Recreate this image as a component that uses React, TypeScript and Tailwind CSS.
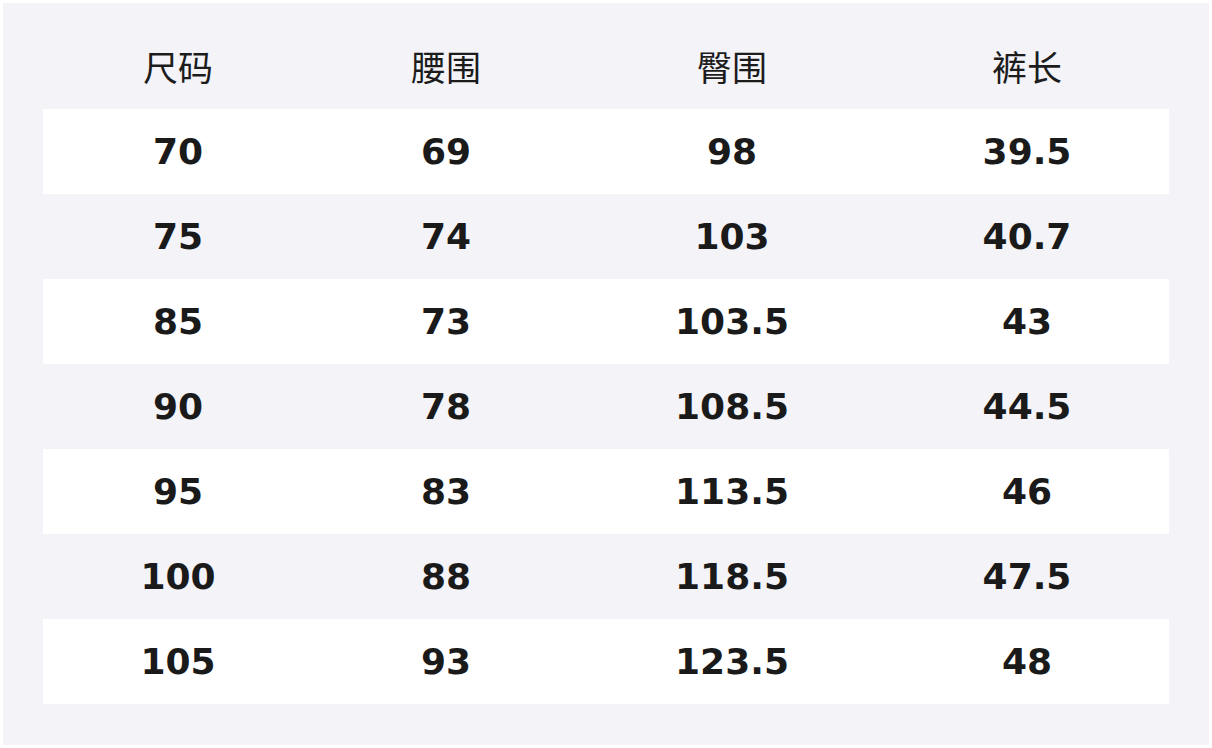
const rows = [
  ["70", "69", "98", "39.5"],
  ["75", "74", "103", "40.7"],
  ["85", "73", "103.5", "43"],
  ["90", "78", "108.5", "44.5"],
  ["95", "83", "113.5", "46"],
  ["100", "88", "118.5", "47.5"],
  ["105", "93", "123.5", "48"],
];

const headers = ["尺码", "腰围", "臀围", "裤长"];

const cols = "grid grid-cols-[270px_266px_306px_284px]";

export default function App() {
  return (
    <div className="w-[1212px] h-[748px] bg-white p-[3px]">
      <div className="h-full bg-[#f3f3f8] px-[40px] pt-[21px]">
        <div className={`${cols} h-[85px] items-center`}>
          {headers.map((h) => (
            <div
              key={h}
              className="text-center text-[35px] text-[#1c1c1c] font-['Noto_Sans_CJK_SC',sans-serif] leading-none -mt-[2px]"
            >
              {h}
            </div>
          ))}
        </div>
        {rows.map((r, i) => (
          <div
            key={i}
            className={`${cols} h-[85px] items-center ${i % 2 === 0 ? "bg-white" : ""}`}
          >
            {r.map((v, j) => (
              <div
                key={j}
                className="text-center text-[36px] font-bold text-[#1a1a1a] font-['DejaVu_Sans',sans-serif] leading-none"
              >
                {v}
              </div>
            ))}
          </div>
        ))}
      </div>
    </div>
  );
}
